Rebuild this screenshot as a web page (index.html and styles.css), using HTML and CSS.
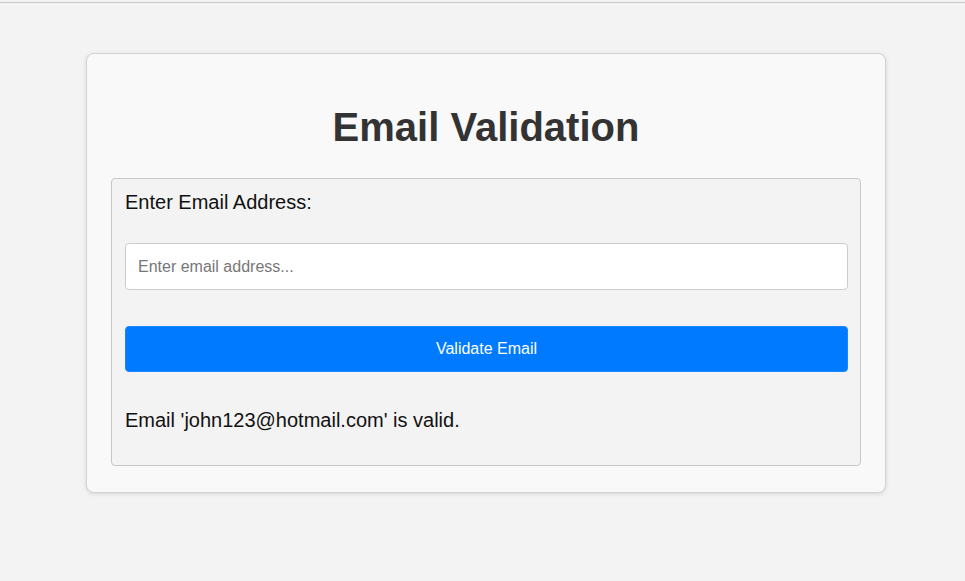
FILE: index.html
```html
<!DOCTYPE html>
<html lang="en">
<head>
<meta charset="utf-8">
<title>Email Validation</title>
<link rel="stylesheet" href="styles.css">
</head>
<body>
<div class="topline"></div>
<main class="page">
  <section class="card">
    <h1 class="title">Email Validation</h1>
    <div class="panel">
      <label class="label" for="email">Enter Email Address:</label>
      <input class="input" id="email" type="text" placeholder="Enter email address...">
      <button class="button" type="button">Validate Email</button>
      <p class="result">Email 'john123@hotmail.com' is valid.</p>
    </div>
  </section>
</main>
</body>
</html>
```
FILE: styles.css
```css
html, body {
  margin: 0;
  padding: 0;
}
body {
  background: #f3f3f3;
  font-family: "Liberation Sans", Arial, sans-serif;
  color: #111;
  height: 581px;
  overflow: hidden;
}
.topline {
  height: 2px;
  border-bottom: 1px solid #c8c8c8;
  background: #f3f3f3;
}
.page {
  display: flex;
  justify-content: center;
  padding: 50px 0 0 7px;
}
.card {
  box-sizing: border-box;
  width: 800px;
  background: #f9f9f9;
  border: 1px solid #d3d3d3;
  border-radius: 8px;
  box-shadow: 0 1px 4px rgba(0, 0, 0, 0.12);
  padding: 24px 24px 26px;
}
.title {
  margin: 24px 0 26px;
  text-align: center;
  font-size: 40px;
  line-height: 50px;
  font-weight: bold;
  color: #333;
}
.panel {
  border: 1px solid #c8c8c8;
  border-radius: 4px;
  background: #f3f3f3;
  padding: 12px 12px 33px 13px;
  display: flex;
  flex-direction: column;
}
.label {
  font-size: 20px;
  line-height: 23px;
  color: #111;
}
.input {
  box-sizing: border-box;
  margin-top: 29px;
  height: 47px;
  border: 1px solid #cccccc;
  border-radius: 4px;
  background: #fff;
  padding: 0 12px;
  font-family: "Liberation Sans", Arial, sans-serif;
  font-size: 16px;
}
.input::placeholder {
  color: #777;
}
.button {
  margin-top: 36px;
  height: 46px;
  border: 1px solid #1a86ff;
  border-radius: 4px;
  background: #007bff;
  color: #fff;
  font-family: "Liberation Sans", Arial, sans-serif;
  font-size: 16px;
}
.result {
  margin: 37px 0 0;
  font-size: 20px;
  line-height: 23px;
  color: #111;
}
```
